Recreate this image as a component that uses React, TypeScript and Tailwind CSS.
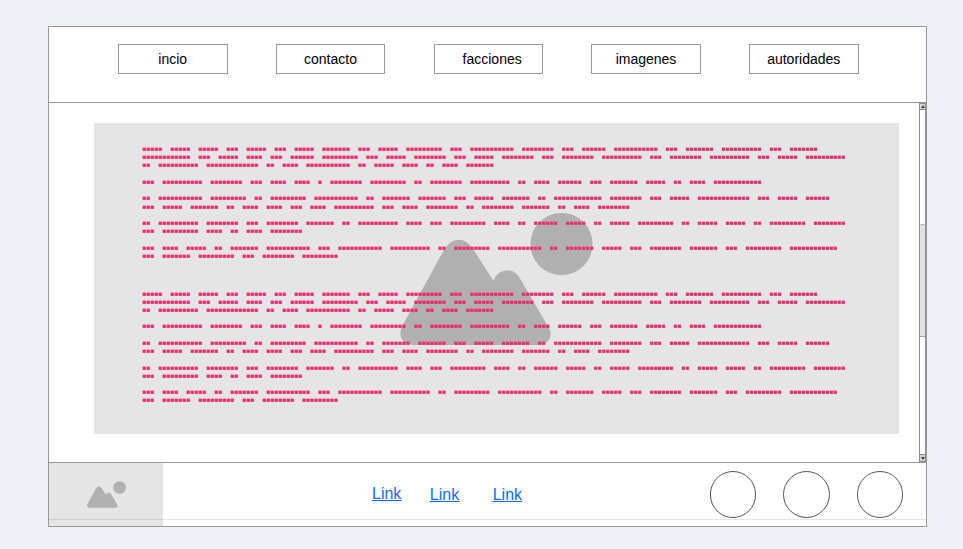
// the double nbsp on facciones is in the reference too, it sits off centre
const navItems = ["incio", "contacto", "\u00a0\u00a0facciones", "imagenes", "autoridades"];

// word lengths of the redacted copy, one array per line, one group per paragraph
const paragraphs = [
  [
    [5, 5, 5, 3, 5, 3, 5, 7, 3, 5, 9, 3, 11, 8, 3, 6, 11, 3, 7, 10, 3, 7],
    [12, 3, 5, 4, 3, 6, 9, 3, 5, 8, 3, 5, 8, 3, 8, 10, 3, 8, 10, 3, 5, 10],
    [2, 10, 13, 2, 4, 11, 2, 5, 4, 2, 4, 7],
  ],
  [[3, 10, 8, 3, 4, 4, 1, 8, 9, 2, 8, 10, 2, 4, 6, 3, 7, 5, 2, 4, 12]],
  [
    [2, 11, 9, 2, 9, 11, 2, 7, 7, 3, 5, 7, 2, 12, 8, 3, 5, 13, 3, 5, 6],
    [3, 5, 7, 2, 4, 4, 3, 4, 10, 3, 4, 8, 2, 8, 7, 2, 4, 8],
  ],
  [
    [2, 10, 8, 3, 8, 7, 2, 10, 4, 3, 9, 4, 2, 6, 5, 2, 5, 9, 2, 5, 5, 2, 9, 8],
    [3, 9, 4, 2, 4, 8],
  ],
  [
    [3, 4, 5, 2, 7, 11, 3, 11, 10, 2, 9, 11, 2, 7, 5, 3, 8, 7, 3, 9, 12],
    [3, 7, 9, 3, 8, 9],
  ],
];

function PlaceholderIcon({ className }: { className: string }) {
  return (
    <svg viewBox="30 37 577 395" className={className} fill="#b0b0b0">
      <circle cx="513" cy="130" r="93" />
      <path d="M72 432C38 432 20 405 38 372L160 150C185 106 226 106 252 150L309 240C325 200 372 196 392 238L470 372C494 405 474 432 440 432Z" />
    </svg>
  );
}

function TextBlock() {
  return (
    <div className="flex flex-col gap-[8.3px]">
      {paragraphs.map((lines, i) => (
        <div key={i}>
          {lines.map((words, j) => (
            <div key={j} className="h-[8.2px] whitespace-pre">
              {words.map((n) => "■".repeat(n)).join("  ")}
            </div>
          ))}
        </div>
      ))}
    </div>
  );
}

function Scrollbar() {
  return (
    <div className="flex w-[7px] shrink-0 flex-col border-x border-[#8f8f8f] bg-white">
      <div className="flex h-[7px] items-center justify-center border-y border-[#8f8f8f] bg-[#d4d4d4]">
        <div className="h-0 w-0 border-x-[2px] border-b-[3px] border-x-transparent border-b-[#444]" />
      </div>
      <div className="mt-[114px] h-[113px] rounded-t-[2px] border-y border-[#a0a0a0] bg-[#e2e2e2]" />
      <div className="mt-auto flex h-[8px] items-center justify-center border-y border-[#8f8f8f] bg-[#d4d4d4]">
        <div className="h-0 w-0 border-x-[2px] border-t-[3px] border-x-transparent border-t-[#444]" />
      </div>
    </div>
  );
}

export default function App() {
  return (
    <div className="h-[549px] w-[963px] overflow-hidden bg-[#eef1f6] pl-[48px] pt-[26px] font-['Liberation_Sans',sans-serif]">
      <div className="flex h-[501px] w-[879px] flex-col border border-[#999] bg-white">
        {/* Nav */}
        <div className="flex h-[76px] shrink-0 gap-[48.25px] border-b border-[#999] pl-[69px] pt-[17px]">
          {navItems.map((item) => (
            <div
              key={item}
              className="flex h-[29.5px] w-[109.5px] items-center justify-center border border-[#999] text-sm text-black"
            >
              {item}
            </div>
          ))}
        </div>

        {/* Main */}
        <div className="flex h-[359px] shrink-0">
          <div className="min-w-0 flex-1 pl-[45px] pt-[20px]">
            <div className="relative h-[311px] w-[805px] bg-[#e5e5e5] pl-[48.6px] pt-[22px] font-['Liberation_Mono',monospace] text-[6.67px] leading-[8.2px] text-[#ee2a6f]">
              <div className="absolute inset-0 flex items-center justify-center">
                <PlaceholderIcon className="h-[132px] w-[193px]" />
              </div>
              <div className="relative flex flex-col gap-[29.5px]">
                <TextBlock />
                <TextBlock />
              </div>
            </div>
          </div>
          <Scrollbar />
        </div>

        {/* Footer */}
        <div className="relative flex flex-1 border-t border-[#999]">
          <div className="flex w-[114px] items-center justify-center bg-[#e5e5e5]">
            <PlaceholderIcon className="h-[27px] w-[39px]" />
          </div>
          <div className="flex gap-[28.5px] pl-[209px] pt-[19px] text-base text-[#0d6efd] underline">
            <a href="#" className="h-fit">Link</a>
            <a href="#" className="mt-px h-fit">Link</a>
            <a href="#" className="ml-[5px] mt-px h-fit">Link</a>
          </div>
          <div className="ml-auto flex gap-[27px] pr-[23px] pt-[8px]">
            <div className="h-[46.5px] w-[46.5px] rounded-full border border-[#555]" />
            <div className="h-[46.5px] w-[46.5px] rounded-full border border-[#555]" />
            <div className="h-[46.5px] w-[46.5px] rounded-full border border-[#555]" />
          </div>
          <div className="absolute inset-x-0 bottom-[6px] h-px bg-black/10" />
        </div>
      </div>
    </div>
  );
}
